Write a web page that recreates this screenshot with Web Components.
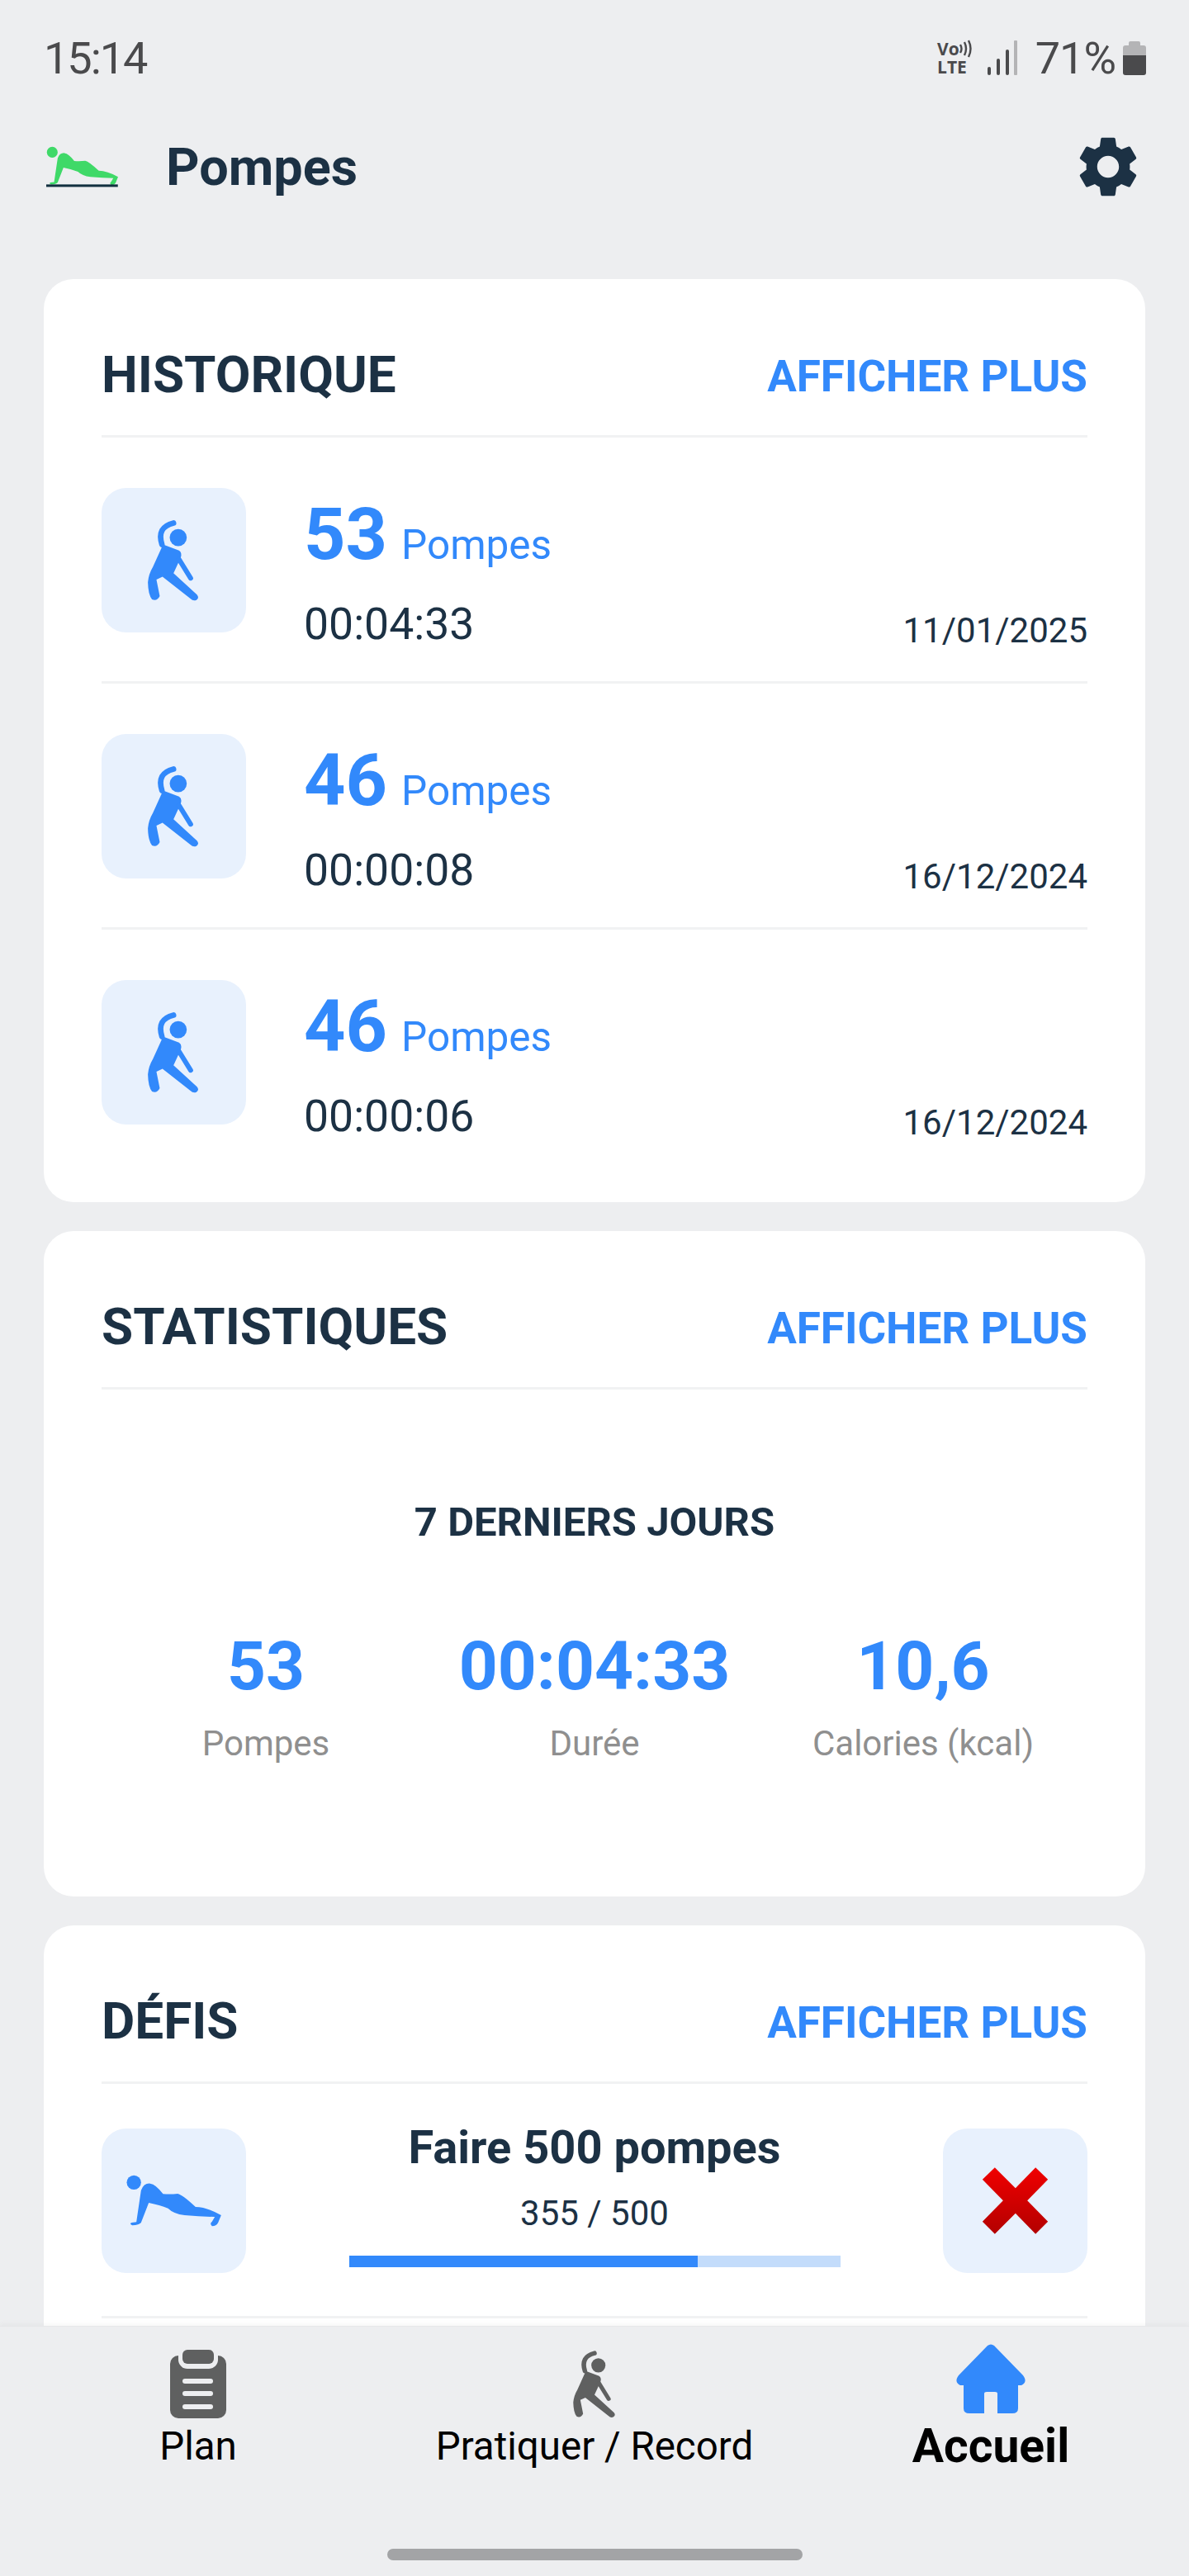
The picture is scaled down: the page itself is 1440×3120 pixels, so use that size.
<!DOCTYPE html>
<html lang="fr">
<head>
<meta charset="utf-8">
<title>Pompes</title>
<style>
  html, body { margin: 0; height: 100%; background: #edeef0; }
  body { font-family: Roboto, "Liberation Sans", sans-serif; color: #1c3144; }
  app-shell { width: 1440px; height: 3120px; }
</style>
</head>
<body>

<app-shell>
  <status-bar slot="top"></status-bar>
  <app-header slot="top">Pompes</app-header>

  <section-card titre="HISTORIQUE">
    <history-row count="53" time="00:04:33" date="11/01/2025"></history-row>
    <history-row count="46" time="00:00:08" date="16/12/2024"></history-row>
    <history-row count="46" time="00:00:06" date="16/12/2024" last></history-row>
  </section-card>

  <section-card titre="STATISTIQUES">
    <stats-panel titre="7 DERNIERS JOURS">
      <stat-item value="53" label="Pompes"></stat-item>
      <stat-item value="00:04:33" label="Durée"></stat-item>
      <stat-item value="10,6" label="Calories (kcal)"></stat-item>
    </stats-panel>
  </section-card>

  <section-card titre="DÉFIS">
    <challenge-row name="Faire 500 pompes" done="355" total="500"></challenge-row>
  </section-card>

  <bottom-nav slot="bottom">
    <nav-item icon="plan" label="Plan"></nav-item>
    <nav-item icon="stretch" label="Pratiquer / Record"></nav-item>
    <nav-item icon="home" label="Accueil" active></nav-item>
  </bottom-nav>
</app-shell>

<script>
// Icones, dessinees a partir des crops de la reference
const PUSHUP_PATH = 'M212 285Q222 258 245 260Q265 262 292 298Q320 300 345 297Q362 300 410 345Q450 345 503 375L492 402Q485 415 470 415Q460 405 470 398L480 381Q430 380 370 375Q330 370 310 350Q280 338 240 330L212 402Q205 411 180 412Q168 405 178 402L195 400Z';

const ICONS = {
  stretch: (c) => `
    <svg viewBox="70 63 522 524" fill="${c}">
      <circle cx="347" cy="243" r="31"/>
      <path d="M330 190Q268 205 288 268" fill="none" stroke="${c}" stroke-width="20" stroke-linecap="round"/>
      <path d="M292 268L350 290Q362 298 356 316L330 372L415 450Q425 462 412 470Q400 474 392 465L290 385L268 395Q275 430 280 455Q270 475 252 467Q238 450 237 405Q240 375 255 350Z"/>
      <path d="M350 322L392 390" fill="none" stroke="${c}" stroke-width="18" stroke-linecap="round"/>
    </svg>`,
  pushup: (c) => `
    <svg viewBox="70 60 522 525" fill="${c}">
      <circle cx="186" cy="256" r="26"/>
      <path d="${PUSHUP_PATH}"/>
    </svg>`,
  cross: () => `
    <svg viewBox="128 60 522 525">
      <defs><linearGradient id="rouge" x1="0" y1="0" x2="0" y2="1">
        <stop offset="0" stop-color="#f00000"/><stop offset="1" stop-color="#b30000"/>
      </linearGradient></defs>
      <path fill="url(#rouge)" d="M315 202L390 277L463 202L508 245L433 322L508 398L463 443L390 368L315 443L270 398L345 322L270 245Z"/>
    </svg>`,
  plan: (c) => `
    <svg viewBox="0 0 68 83" width="68" height="83">
      <rect x="0" y="7" width="68" height="76" rx="10" fill="${c}"/>
      <rect x="10" y="-4" width="48" height="27" rx="11" fill="#edeef0"/>
      <rect x="15" y="0" width="38" height="17" rx="6" fill="${c}"/>
      <rect x="15" y="35" width="37" height="6" rx="3" fill="#edeef0"/>
      <rect x="15" y="50" width="37" height="6" rx="3" fill="#edeef0"/>
      <rect x="15" y="66" width="37" height="6" rx="3" fill="#edeef0"/>
    </svg>`,
  home: (c) => `
    <svg viewBox="0 0 84 84" width="84" height="84" fill="${c}">
      <path d="M38 2Q42 -1 46 2L81 38Q87 46 79 50H75V78Q75 84 68 84H50V60Q50 58 47 58H37Q34 58 34 60V84H16Q9 84 9 78V50H5Q-3 46 3 38Z"/>
    </svg>`
};

class AppShell extends HTMLElement {
  constructor() {
    super();
    this.attachShadow({ mode: 'open' }).innerHTML = `
      <style>
        :host { display: flex; flex-direction: column; overflow: hidden; background: #edeef0; }
        .contenu { flex: 1; min-height: 0; overflow: hidden; padding: 0 53px;
                   display: flex; flex-direction: column; gap: 35px; }
      </style>
      <slot name="top"></slot>
      <div class="contenu"><slot></slot></div>
      <slot name="bottom"></slot>`;
  }
}

class StatusBar extends HTMLElement {
  constructor() {
    super();
    this.attachShadow({ mode: 'open' }).innerHTML = `
      <style>
        :host { display: flex; align-items: center; justify-content: space-between;
                height: 140px; box-sizing: border-box; padding: 0 52px 0 53px; color: #4a4a4c;
                font: 400 54px Roboto, sans-serif; }
        .heure { letter-spacing: -2px; }
        .droite { display: flex; align-items: center; }
        .volte { display: flex; flex-direction: column; align-items: flex-start; margin-right: 18px;
                 font: 700 21px/22px "Open Sans", sans-serif; color: #4a4a4c; }
        .vo { display: flex; align-items: center; }
        .signal { margin-right: 22px; }
        .pct { letter-spacing: -1px; margin-right: 9px; }
      </style>
      <span class="heure">15:14</span>
      <div class="droite">
        <div class="volte">
          <span class="vo">Vo<svg width="16" height="22" viewBox="0 0 16 22"><path d="M1 6Q4 11 1 16M6 3Q10 11 6 19M11 1Q16 11 11 21" fill="none" stroke="#4a4a4c" stroke-width="2.4"/></svg></span>
          <span>LTE</span>
        </div>
        <svg class="signal" width="36" height="42" viewBox="0 0 36 42">
          <rect x="0" y="32" width="4" height="10" rx="2" fill="#4a4a4c"/>
          <rect x="11" y="22" width="4" height="20" rx="2" fill="#4a4a4c"/>
          <rect x="22" y="11" width="4" height="31" rx="2" fill="#4a4a4c"/>
          <rect x="32" y="0" width="4" height="42" rx="1" fill="#b4b4b6"/>
        </svg>
        <span class="pct">71%</span>
        <svg width="28" height="41" viewBox="0 0 28 41">
          <path d="M9 0H19Q21 0 21 2V5H25Q28 5 28 8V17H0V8Q0 5 3 5H7V2Q7 0 9 0Z" fill="#b4b4b6"/>
          <path d="M0 17H28V38Q28 41 25 41H3Q0 41 0 38Z" fill="#4a4a4c"/>
        </svg>
      </div>`;
  }
}

class AppHeader extends HTMLElement {
  constructor() {
    super();
    this.attachShadow({ mode: 'open' }).innerHTML = `
      <style>
        :host { display: flex; align-items: center; height: 198px; box-sizing: border-box;
                padding: 0 54px 74px 56px; }
        .logo { width: 88px; height: 50px; display: block; }
        h1 { flex: 1; margin: 0 0 0 57px; font: 700 63px Roboto, sans-serif; color: #1c3144; }
        .reglage { width: 88px; height: 88px; }
      </style>
      <svg class="logo" viewBox="157 228 350 196">
        <circle cx="186" cy="256" r="26" fill="#3fd968"/>
        <path d="${PUSHUP_PATH}" fill="#3fd968"/>
        <rect x="157" y="411" width="345" height="12" fill="#12303f"/>
      </svg>
      <h1><slot></slot></h1>
      <svg class="reglage" viewBox="0 0 24 24" fill="#1c3144">
        <path d="M19.14 12.94c.04-.3.06-.61.06-.94 0-.32-.02-.64-.07-.94l2.03-1.58a.49.49 0 0 0 .12-.61l-1.92-3.32a.488.488 0 0 0-.59-.22l-2.39.96c-.5-.38-1.03-.7-1.62-.94l-.36-2.54a.484.484 0 0 0-.48-.41h-3.84c-.24 0-.43.17-.47.41l-.36 2.54c-.59.24-1.13.57-1.62.94l-2.39-.96c-.22-.08-.47 0-.59.22L2.74 8.87c-.12.21-.08.47.12.61l2.03 1.58c-.05.3-.09.63-.09.94s.02.64.07.94l-2.03 1.58a.49.49 0 0 0-.12.61l1.92 3.32c.12.22.37.29.59.22l2.39-.96c.5.38 1.03.7 1.62.94l.36 2.54c.05.24.24.41.48.41h3.84c.24 0 .44-.17.47-.41l.36-2.54c.59-.24 1.13-.56 1.62-.94l2.39.96c.22.08.47 0 .59-.22l1.92-3.32c.12-.22.07-.47-.12-.61l-2.01-1.58zM12 15.6c-1.98 0-3.6-1.62-3.6-3.6s1.62-3.6 3.6-3.6 3.6 1.62 3.6 3.6-1.62 3.6-3.6 3.6z"/>
      </svg>`;
  }
}

class SectionCard extends HTMLElement {
  constructor() {
    super();
    this.attachShadow({ mode: 'open' }).innerHTML = `
      <style>
        :host { display: block; flex: none; background: #fff; border-radius: 36px; padding: 0 70px; }
        .entete { display: flex; align-items: center; justify-content: space-between;
                  height: 192px; padding-top: 42px; box-sizing: border-box;
                  border-bottom: 3px solid #f1f2f3; }
        h2 { margin: 0; font: 700 62px Roboto, sans-serif; color: #1c3144; }
        a { font: 700 53px Roboto, sans-serif; color: #3289fb; margin-top: 4px; }
      </style>
      <div class="entete"><h2></h2><a>AFFICHER PLUS</a></div>
      <slot></slot>`;
    this.shadowRoot.querySelector('h2').textContent = this.getAttribute('titre');
  }
}

class IconTile extends HTMLElement {
  constructor() {
    super();
    const couleur = this.getAttribute('color') || '#3289fb';
    this.attachShadow({ mode: 'open' }).innerHTML = `
      <style>
        :host { display: block; flex: none; width: 175px; height: 175px; border-radius: 30px;
                background: #e8f1fd; }
        svg { display: block; width: 100%; height: 100%; }
      </style>
      ${ICONS[this.getAttribute('icon')](couleur)}`;
  }
}
customElements.define('icon-tile', IconTile);

class HistoryRow extends HTMLElement {
  constructor() {
    super();
    const a = (n) => this.getAttribute(n);
    this.attachShadow({ mode: 'open' }).innerHTML = `
      <style>
        :host { display: flex; align-items: flex-start; height: 298px; box-sizing: border-box;
                padding-top: 61px; border-bottom: 3px solid #f1f2f3; }
        :host([last]) { border-bottom: 0; height: 330px; }
        .infos { flex: 1; margin-left: 70px; padding-top: 3px; display: flex; flex-direction: column; }
        .compte { display: flex; align-items: baseline; height: 106px; color: #3289fb; }
        b { font: 700 88px/106px Roboto, sans-serif; }
        .unite { font: 400 49.5px Roboto, sans-serif; margin-left: 17px; }
        .duree { font: 400 53.5px/60px Roboto, sans-serif; color: #1c3144; margin-top: 26px; }
        .date { height: 199px; display: flex; align-items: flex-end;
                font: 400 42px/52px Roboto, sans-serif; color: #1c3144; }
      </style>
      <icon-tile icon="stretch"></icon-tile>
      <div class="infos">
        <div class="compte"><b>${a('count')}</b><span class="unite">Pompes</span></div>
        <div class="duree">${a('time')}</div>
      </div>
      <div class="date">${a('date')}</div>`;
  }
}

class StatsPanel extends HTMLElement {
  constructor() {
    super();
    this.attachShadow({ mode: 'open' }).innerHTML = `
      <style>
        :host { display: block; height: 614px; box-sizing: border-box; padding-top: 131px; }
        h3 { margin: 0; font: 700 49px/60px Roboto, sans-serif; text-align: center; color: #1c3144; }
        .grille { display: grid; grid-template-columns: repeat(3, 1fr); margin-top: 96px; }
      </style>
      <h3></h3>
      <div class="grille"><slot></slot></div>`;
    this.shadowRoot.querySelector('h3').textContent = this.getAttribute('titre');
  }
}

class StatItem extends HTMLElement {
  constructor() {
    super();
    this.attachShadow({ mode: 'open' }).innerHTML = `
      <style>
        :host { display: flex; flex-direction: column; align-items: center; }
        b { font: 700 82px/96px Roboto, sans-serif; color: #3289fb; }
        span { font: 400 42px/50px Roboto, sans-serif; color: #8f8f8f; margin-top: 21px; }
      </style>
      <b>${this.getAttribute('value')}</b>
      <span>${this.getAttribute('label')}</span>`;
  }
}

class ChallengeRow extends HTMLElement {
  constructor() {
    super();
    const fait = Number(this.getAttribute('done'));
    const total = Number(this.getAttribute('total'));
    this.attachShadow({ mode: 'open' }).innerHTML = `
      <style>
        :host { display: flex; align-items: flex-start; padding-top: 54px; height: 284px; margin-bottom: 80px;
                box-sizing: border-box; border-bottom: 3px solid #f1f2f3; }
        .milieu { flex: 1; display: flex; flex-direction: column; align-items: center; margin-top: -9px; }
        .nom { font: 700 56px/64px Roboto, sans-serif; color: #1c3144; }
        .chiffres { font: 400 42px/50px Roboto, sans-serif; color: #1c3144; margin-top: 23px; }
        .piste { width: 595px; height: 14px; background: #c3dcfb; margin-top: 26px; }
        .rempli { height: 100%; background: #3289fb; }
      </style>
      <icon-tile icon="pushup"></icon-tile>
      <div class="milieu">
        <div class="nom">${this.getAttribute('name')}</div>
        <div class="chiffres">${fait} / ${total}</div>
        <div class="piste"><div class="rempli" style="width:${fait / total * 100}%"></div></div>
      </div>
      <icon-tile icon="cross"></icon-tile>`;
  }
}

class BottomNav extends HTMLElement {
  constructor() {
    super();
    this.attachShadow({ mode: 'open' }).innerHTML = `
      <style>
        :host { display: block; flex: none; height: 303px; box-sizing: border-box; background: #edeef0;
                border-top: 1px solid #e6e7e9; box-shadow: 0 -3px 6px rgba(0,0,0,.03); position: relative; }
        .items { display: grid; grid-template-columns: repeat(3, 1fr); height: 173px; }
        .barre { width: 503px; height: 14px; margin: 96px auto 0; background: #a3a4a6; border-radius: 7px; }
      </style>
      <div class="items"><slot></slot></div>
      <div class="barre"></div>`;
  }
}

class NavItem extends HTMLElement {
  constructor() {
    super();
    const actif = this.hasAttribute('active');
    const nom = this.getAttribute('icon');
    const couleur = actif ? '#3289fb' : '#5f6060';
    const icone = nom === 'stretch'
      ? `<svg width="68" height="83" viewBox="225 175 210 300" fill="${couleur}">${ICONS.stretch(couleur).replace(/<\/?svg[^>]*>/g, '')}</svg>`
      : ICONS[nom](couleur);
    this.attachShadow({ mode: 'open' }).innerHTML = `
      <style>
        :host { display: flex; flex-direction: column; align-items: center; justify-content: flex-end; }
        span { font: 400 47.5px/56px Roboto, sans-serif; color: #000; margin-top: 6px; white-space: nowrap; }
        :host([active]) span { font: 700 57px/56px Roboto, sans-serif; margin-top: 12px; }
        svg { display: block; overflow: visible; }
      </style>
      ${icone}
      <span>${this.getAttribute('label')}</span>`;
  }
}

customElements.define('status-bar', StatusBar);
customElements.define('app-header', AppHeader);
customElements.define('section-card', SectionCard);
customElements.define('history-row', HistoryRow);
customElements.define('stats-panel', StatsPanel);
customElements.define('stat-item', StatItem);
customElements.define('challenge-row', ChallengeRow);
customElements.define('bottom-nav', BottomNav);
customElements.define('nav-item', NavItem);
customElements.define('app-shell', AppShell);
</script>
</body>
</html>
